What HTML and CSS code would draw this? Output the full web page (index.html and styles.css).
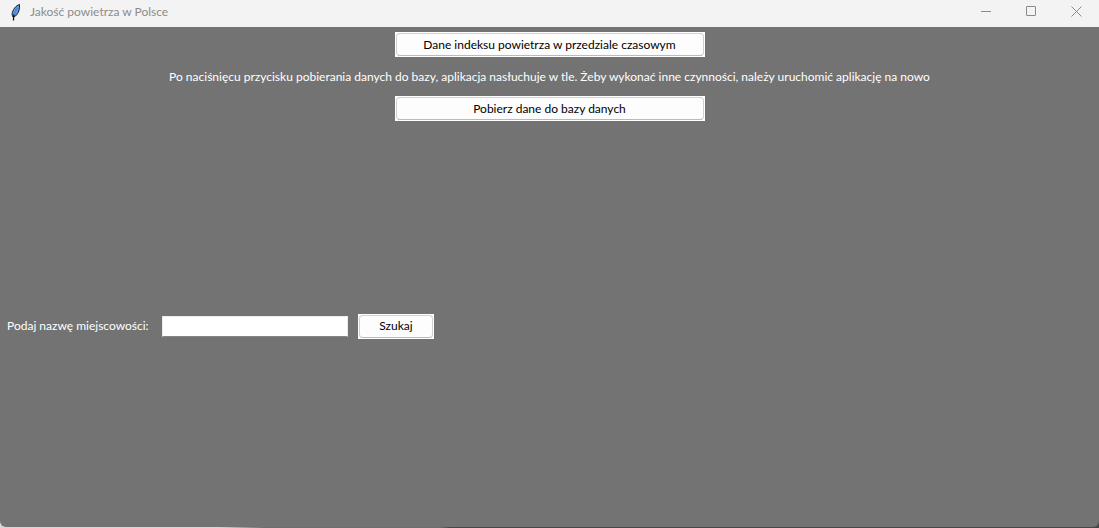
FILE: index.html
```html
<!DOCTYPE html>
<html lang="pl">
<head>
<meta charset="utf-8">
<title>Jakość powietrza w Polsce</title>
<link rel="stylesheet" href="styles.css">
</head>
<body>
<div class="window">
  <header class="titlebar">
    <svg class="feather" width="12" height="18" viewBox="0 0 12 18" aria-hidden="true">
      <path d="M9.500 1.500C6 2.500 2.500 6.500 2 11.500L3 14L5.500 13C8.500 10.500 10 6 9.500 1.500Z" fill="#5b9be8" stroke="#1c2230" stroke-width="1"/>
      <path d="M7.500 4.500C6 7 4.500 9 4 12" stroke="#4a86d4" stroke-width="1.500" fill="none"/>
      <path d="M4 11.500C3.500 13 3.500 15 3.500 17.500" stroke="#111" stroke-width="1.300" fill="none"/>
    </svg>
    <h1 class="title">Jakość powietrza w Polsce</h1>
    <div class="controls">
      <button class="control" aria-label="Minimalizuj"><svg width="11" height="11" viewBox="0 0 11 11"><path d="M0 5.500H10"/></svg></button>
      <button class="control" aria-label="Maksymalizuj"><svg width="11" height="11" viewBox="0 0 11 11"><rect x=".5" y=".5" width="9" height="9" rx=".5"/></svg></button>
      <button class="control" aria-label="Zamknij"><svg width="11" height="11" viewBox="0 0 11 11"><path d="M.5 .5L10.500 10.500M10.500 .5L.5 10.500"/></svg></button>
    </div>
  </header>
  <main class="content">
    <section class="actions">
      <button class="button wide"><span class="face">Dane indeksu powietrza w przedziale czasowym</span></button>
      <p class="note">Po naciśnięcu przycisku pobierania danych do bazy, aplikacja nasłuchuje w tle. Żeby wykonać inne czynności, należy uruchomić aplikację na nowo</p>
      <button class="button wide"><span class="face">Pobierz dane do bazy danych</span></button>
    </section>
    <form class="search">
      <label class="label" for="city">Podaj nazwę miejscowości:</label>
      <input class="field" id="city" type="text">
      <button class="button" type="button"><span class="face">Szukaj</span></button>
    </form>
  </main>
</div>
</body>
</html>
```
FILE: styles.css
```css
* { box-sizing: border-box; }

body {
  margin: 0;
  background: linear-gradient(90deg, #d8d6d6 0 20%, #3f7f96 24% 40%, #4b4448 41%);
  font: 12px/16px Lato, "Open Sans", sans-serif;
}

button, input { font: inherit; }

.window {
  display: flex;
  flex-direction: column;
  min-height: calc(100vh - 1px);
  background: #737373;
  border-radius: 0 0 6px 6px;
  overflow: hidden;
}

.titlebar {
  display: flex;
  align-items: center;
  height: 27px;
  padding: 0 0 4px 10px;
  background: #f3f3f3;
}

.title {
  flex: 1;
  margin: 0 0 0 8px;
  font-size: 12px;
  font-weight: 400;
  color: #8c8c8c;
}

.controls { display: flex; }

.control {
  display: flex;
  align-items: center;
  justify-content: center;
  width: 45px;
  height: 22px;
  padding: 0;
  border: 0;
  background: none;
}

.control svg { fill: none; stroke: #8a8a8a; }

.content {
  flex: 1;
  display: flex;
  flex-direction: column;
}

.actions {
  display: flex;
  flex-direction: column;
  align-items: center;
  padding-top: 5px;
}

.note {
  margin: 12px 0 11px;
  color: #fff;
  white-space: nowrap;
}

.button {
  width: 76px;
  height: 25px;
  padding: 1px;
  border: 0;
  background: #fff;
  color: #000;
}

.wide { width: 310px; }

.face {
  display: flex;
  align-items: center;
  justify-content: center;
  height: 100%;
  border: 1px solid #d0d0d0;
  border-bottom-color: #bababa;
  border-radius: 4px;
  background: #fdfdfd;
}

.search {
  flex: 1;
  display: flex;
  align-items: center;
  padding: 4px 7px 0;
}

.label { width: 155px; color: #fff; white-space: nowrap; }

.field {
  width: 186px;
  height: 21px;
  margin-right: 10px;
  padding: 0 3px;
  border: 1px solid #ececec;
  border-bottom-color: #868686;
  background: #fff;
}
```
